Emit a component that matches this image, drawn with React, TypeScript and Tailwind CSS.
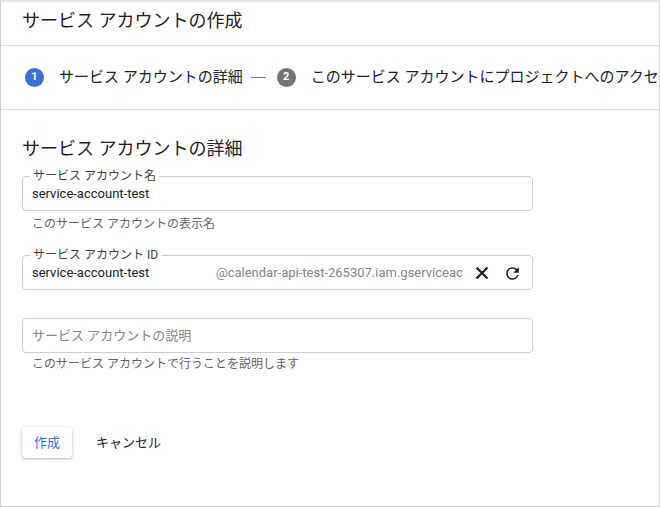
const font = { fontFamily: 'Roboto, "Noto Sans CJK JP", sans-serif' };

const StepBadge = ({ n, active }: { n: number; active?: boolean }) => (
  <span
    className={`${active ? 'bg-[#3a6fd8]' : 'bg-[#747474]'} flex h-[19px] w-[19px] shrink-0 items-center justify-center rounded-full text-[11px] font-bold text-white`}
  >
    {n}
  </span>
);

const CloseIcon = () => (
  <svg width="16" height="16" viewBox="0 0 16 16" fill="none">
    <path d="M2.5 2.5L13.5 13.5M13.5 2.5L2.5 13.5" stroke="#202124" strokeWidth="2.3" />
  </svg>
);

const RefreshIcon = () => (
  <svg width="19" height="19" viewBox="0 0 24 24">
    <path
      fill="#202124"
      d="M17.65 6.35A7.96 7.96 0 0 0 12 4a8 8 0 1 0 7.73 10h-2.08A6 6 0 1 1 12 6c1.66 0 3.14.69 4.22 1.78L13 11h7V4l-2.35 2.35z"
    />
  </svg>
);

// Outlined text field with floating label
const Field = ({
  label,
  children,
}: {
  label?: string;
  children: React.ReactNode;
}) => (
  <div className="relative h-[35px] w-[511px] rounded-[4px] border border-[#cdcdcd]">
    {label && (
      <span className="absolute -top-[9px] left-[7px] bg-white px-[3px] text-[12px] leading-[16px] text-[#3c4043]">
        {label}
      </span>
    )}
    <div className="flex h-full items-center pl-[9px] pr-[10px] pt-[1px]">{children}</div>
  </div>
);

export default function App() {
  return (
    <div style={font} className="h-[507px] w-[660px] overflow-hidden bg-white">
      <div className="h-full w-full border-x border-b border-t-2 border-x-[#cfcfcf] border-b-[#cfcfcf] border-t-[#e6e6e6]">
        <div className="flex h-[44px] items-start border-b border-[#dcdcdc] pl-[21px] pt-[7px]">
          <h1 className="text-[18px] leading-[24px] text-[#202124]">サービス アカウントの作成</h1>
        </div>

        <div className="flex h-[64px] items-center overflow-hidden whitespace-nowrap border-b border-[#dcdcdc] pl-[24px] text-[15px] text-[#202124]">
          <StepBadge n={1} active />
          <span className="ml-[15px]">サービス アカウントの詳細</span>
          <span className="ml-[8px] h-px w-[15px] shrink-0 bg-[#757575]" />
          <span className="ml-[11px]">
            <StepBadge n={2} />
          </span>
          <span className="ml-[15px]">このサービス アカウントにプロジェクトへのアクセス権を付与</span>
        </div>

        <div className="pl-[21px] pt-[27px]">
          <h2 className="text-[18px] leading-[24px] text-[#202124]">サービス アカウントの詳細</h2>

          <div className="mt-[15px]">
            <Field label="サービス アカウント名">
              <span className="text-[13px] text-[#202124]">service-account-test</span>
            </Field>
            <p className="mt-[5px] pl-[10px] text-[12px] leading-[16px] text-[#5f6368]">
              このサービス アカウントの表示名
            </p>
          </div>

          <div className="mt-[23px]">
            <Field label="サービス アカウント ID">
              <span className="w-[184px] text-[13px] text-[#202124]">service-account-test</span>
              <span className="flex-1 overflow-hidden whitespace-nowrap text-[13px] text-[#80868b]">
                @calendar-api-test-265307.iam.gserviceac
              </span>
              <span className="ml-[6px] flex items-center gap-[13px]">
                <CloseIcon />
                <RefreshIcon />
              </span>
            </Field>
          </div>

          <div className="mt-[28px]">
            <Field>
              <span className="text-[13px] text-[#80868b]">サービス アカウントの説明</span>
            </Field>
            <p className="mt-[3px] pl-[10px] text-[12px] leading-[16px] text-[#5f6368]">
              このサービス アカウントで行うことを説明します
            </p>
          </div>

          <div className="mt-[55px] flex items-center">
            <button className="h-[31px] w-[50px] rounded-[4px] bg-white text-[13px] text-[#3a6fd8] shadow-[0_1px_3px_rgba(0,0,0,0.3)]">
              作成
            </button>
            <button className="ml-[24px] text-[13px] text-[#202124]">キャンセル</button>
          </div>
        </div>
      </div>
    </div>
  );
}
